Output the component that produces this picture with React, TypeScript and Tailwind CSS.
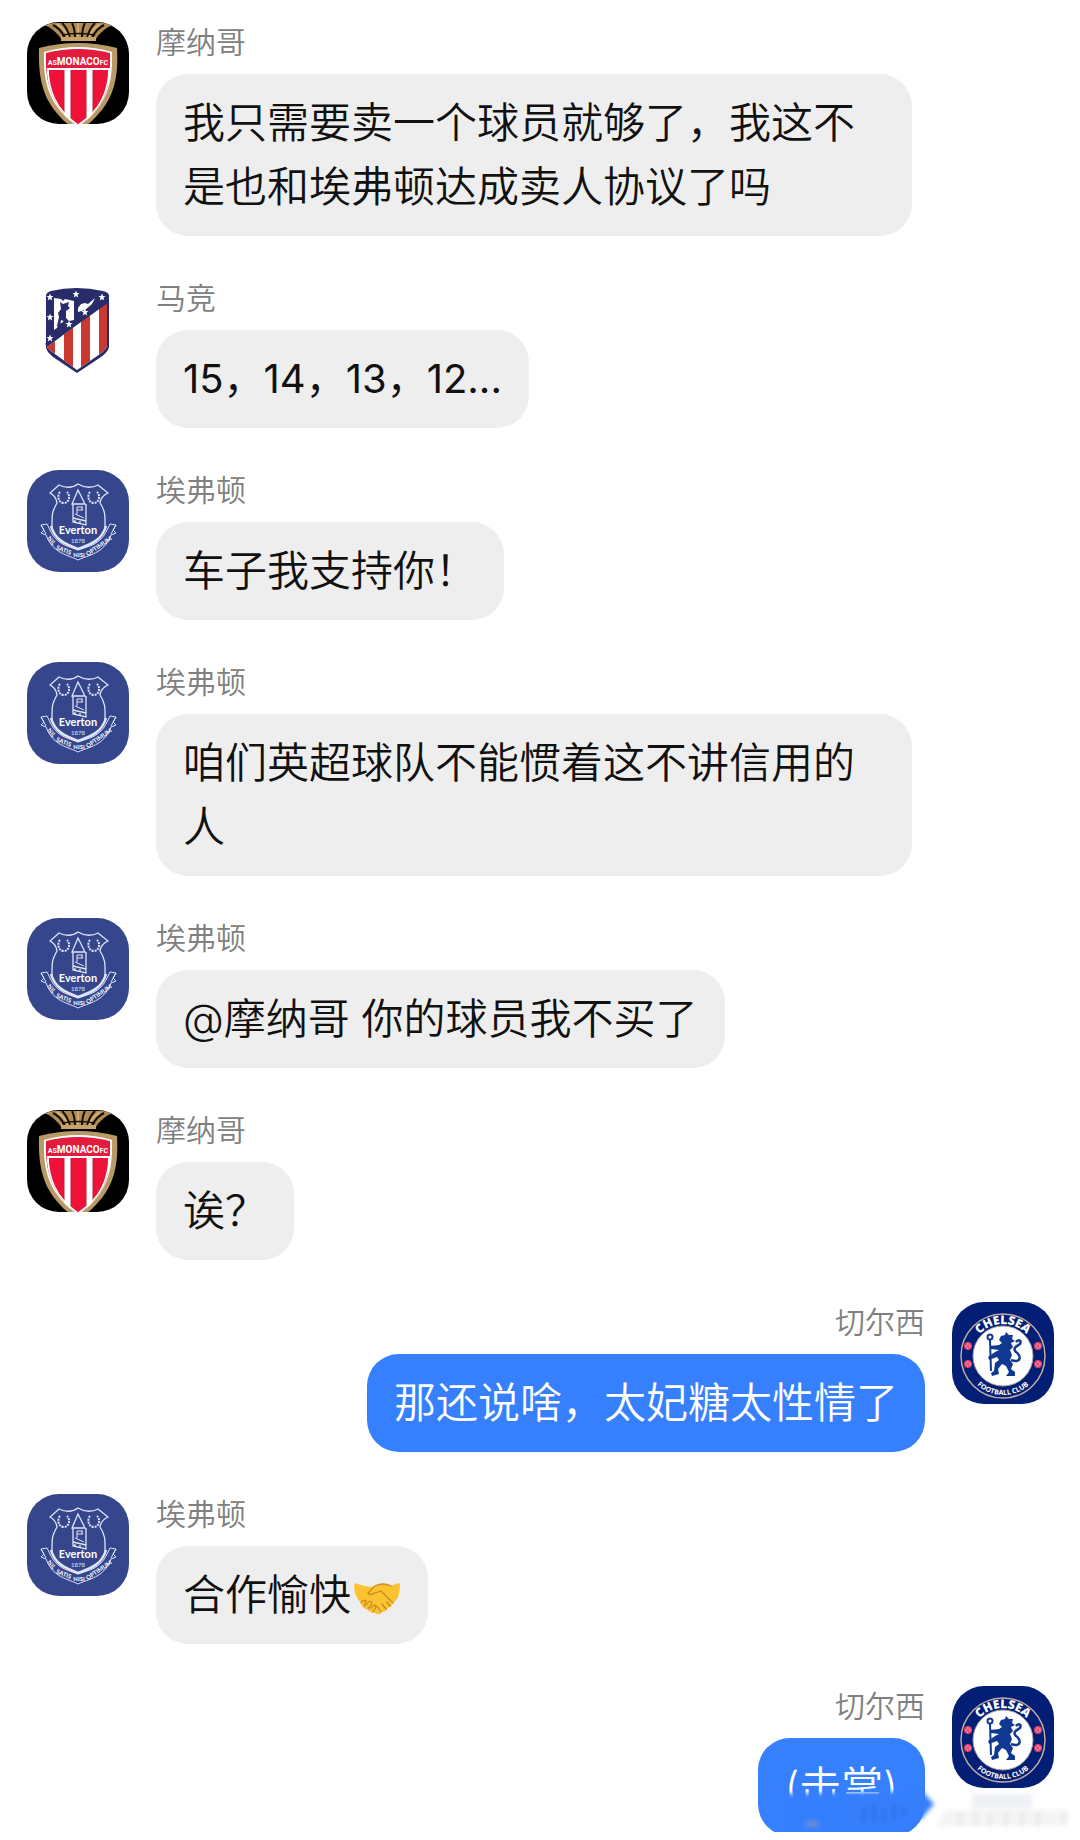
import { useId, type ReactNode } from "react";

type Club = "monaco" | "atletico" | "everton" | "chelsea";

interface Message {
  id: number;
  club: Club;
  content: ReactNode;
  mine?: boolean;
}

const NAMES: Record<Club, string> = {
  monaco: "摩纳哥",
  atletico: "马竞",
  everton: "埃弗顿",
  chelsea: "切尔西",
};

function MonacoCrest() {
  const clip = useId();
  return (
    <svg viewBox="0 0 102 102" className="size-full">
      <defs>
        <clipPath id={clip}>
          <path d="M20 46H83C82 68 76 88 51 104C27 88 21 68 20 46Z" />
        </clipPath>
      </defs>
      <rect width="102" height="102" fill="#000" />
      {/* Crown */}
      <path d="M17 3Q22 1 28 1H75Q81 1 86 3Q76 6 68 18H35Q27 6 17 3Z" fill="#b08c54" />
      <path d="M26 3Q34 7 38 16M35 1Q41 7 43 16M45 1Q48 7 48 16M58 1Q55 7 55 16M68 1Q62 7 60 16M77 3Q69 7 65 16" fill="none" stroke="#150e05" strokeWidth="2" />
      <path d="M30 2Q38 7 41 15M51 1V15M73 2Q65 7 62 15" fill="none" stroke="#d6b67b" strokeWidth="1.5" />
      <path d="M35 13Q51 10 68 13" fill="none" stroke="#150e05" strokeWidth="1.5" />
      <path d="M34 20L37 25H66L69 20Z" fill="#000" />
      <rect x="34" y="15" width="35" height="4" fill="#c5a469" />
      {/* Shield */}
      <path d="M12 26Q51 16 90 26C92 62 85 86 51 110C17 86 11 62 12 26Z" fill="#b89a64" />
      <path d="M17 30Q51 20 85 30C86 62 80 84 51 105C22 84 16 62 17 30Z" fill="#fff" />
      <path d="M19 31Q51 23 83 31C84 62 78 82 51 102C24 82 18 62 19 31Z" fill="#e31b3d" />
      <g clipPath={`url(#${clip})`}>
        <rect x="17" y="46" width="68" height="60" fill="#fff" />
        <path d="M22 48H37V106H22ZM44 48H59V106H44ZM66 48H81V106H66Z" fill="#ee1238" />
        <path d="M37 48V106M44 48V106M59 48V106M66 48V106" stroke="#a62745" />
        <path d="M20 46C21 68 27 88 51 104C76 88 82 68 83 46" fill="none" stroke="#fff" strokeWidth="3" />
      </g>
      <path d="M20 47H83" stroke="#fff" strokeWidth="2" />
      <text x="51" y="43" textAnchor="middle" fill="#fff" fontFamily="Liberation Sans Narrow, Roboto, sans-serif" fontWeight="700">
        <tspan fontSize="7">AS</tspan>
        <tspan fontSize="10">MONACO</tspan>
        <tspan fontSize="7">FC</tspan>
      </text>
    </svg>
  );
}

const STARS = [
  [23, 19],
  [49, 16],
  [75, 19],
  [23, 39],
  [58, 34],
  [42, 46],
  [23, 60],
];

function AtleticoCrest() {
  const clip = useId();
  return (
    <svg viewBox="0 0 102 102" className="size-full">
      <defs>
        <clipPath id={clip}>
          <path d="M20 69L80 24V67Q80 71 73 76L50 92L28 76Q21 71 20 69Z" />
        </clipPath>
      </defs>
      <path d="M19 17Q20 14 24 13Q49 7 76 13Q81 14 82 17V69Q81 74 74 79L50 95L26 79Q19 73 19 69Z" fill="#282d6a" />
      <g clipPath={`url(#${clip})`}>
        <rect x="18" y="20" width="64" height="76" fill="#fff" />
        <path d="M20 20H28V96H20ZM37 20H46V96H37ZM54 20H63V96H54ZM72 20H80V96H72Z" fill="#c8392f" />
      </g>
      <path d="M19 67L81 23" stroke="#282d6a" strokeWidth="3" />
      {/* Bear and strawberry tree */}
      <path d="M27 20L34 21L36 23L38 21L47 23V42L42 43L39 40L36 44L31 47L30 50L27 52Z" fill="#fff" />
      <path d="M33 24L36 26L42 24L41 28L43 30L39 33L39 44L34 42L33 48H30L32 39L31 35L34 31Z" fill="#282d6a" />
      <path d="M51 30L54 26L58 25L61 26L68 20L65 26L58 32L51 34Z" fill="#fff" />
      {STARS.map(([x, y]) => (
        <path
          key={`${x}-${y}`}
          transform={`translate(${x} ${y})`}
          d="M0-3.5L1-1L3.5-1L1.5.8L2.2 3.4L0 1.9L-2.2 3.4L-1.5.8L-3.5-1L-1-1Z"
          fill="#fff"
        />
      ))}
    </svg>
  );
}

function EvertonCrest() {
  return (
    <svg viewBox="0 0 102 102" className="size-full">
      <rect width="102" height="102" fill="#35468c" />
      <g fill="none" stroke="#dfe5f8" strokeWidth="1.3">
        <path d="M25 58C25 43 25 42 30 33Q29 26 23 23L32 15Q43 20 51 14Q61 20 71 15L81 23Q74 26 73 33C79 42 78 47 78 58" />
        <path d="M24 56C28 70 38 74 51 79C65 74 75 70 79 56" strokeWidth="2.5" />
        <path d="M33 22C30 25 31 33 37 33C42 33 44 26 40 22M63 22C60 25 61 33 67 33C72 33 74 26 70 22" strokeDasharray="2 1" strokeWidth="2" />
        <path d="M51 20L45 34H58ZM46 34V52L59 55V34M46 48L59 51M48 50V53M53 51V54" />
        <path d="M50 37H56M50 37V44M50 40H56M55 37V40M48 44L57 48" strokeWidth="1" />
        {/* Motto ribbon */}
        <path d="M19 64L14 55L20 54L23 60C30 75 41 76 51 80C62 76 73 75 80 60L83 54L89 55L84 64M14 55L17 60L14 63L19 65C26 84 42 85 51 90C61 85 77 84 84 65L89 63L86 60L89 55" strokeWidth="1" />
      </g>
      <text x="51" y="64" textAnchor="middle" fontSize="11" fontWeight="700" fontFamily="Lato, sans-serif" fill="#fff">
        Everton
      </text>
      <text x="51" y="73" textAnchor="middle" fontSize="6" fontWeight="400" fontFamily="Lato, sans-serif" fill="#dfe5f8">
        1878
      </text>
      <g fontSize="6" fontWeight="700" fontFamily="Lato, sans-serif" fill="#fff" textAnchor="middle">
        <text transform="translate(23 72) rotate(52)">NIL</text>
        <text transform="translate(36 82) rotate(22)">SATIS</text>
        <text transform="translate(52 87)">NISI</text>
        <text transform="translate(73 78) rotate(-34)">OPTIMUM</text>
      </g>
    </svg>
  );
}

function ChelseaCrest() {
  const top = useId();
  const bottom = useId();
  return (
    <svg viewBox="0 0 102 102" className="size-full">
      <defs>
        <path id={top} d="M19 54A32 32 0 0 1 83 54" />
        <path id={bottom} d="M12 54A39 39 0 0 0 90 54" />
      </defs>
      <rect width="102" height="102" fill="#031f75" />
      <circle cx="51" cy="54" r="42" fill="none" stroke="#c2aba0" strokeWidth="1.5" />
      <circle cx="51" cy="54" r="30" fill="#fff" stroke="#aaa0a5" />
      <text fontSize="12" fontWeight="800" fontFamily="Open Sans, sans-serif" fill="#fff">
        <textPath href={`#${top}`} startOffset="50%" textAnchor="middle">
          CHELSEA
        </textPath>
      </text>
      <text fontSize="7" fontWeight="700" fontFamily="Open Sans, sans-serif" fill="#fff">
        <textPath href={`#${bottom}`} startOffset="50%" textAnchor="middle">
          FOOTBALL CLUB
        </textPath>
      </text>
      {[
        [16, 44],
        [16, 62],
        [86, 44],
        [86, 62],
      ].map(([x, y]) => (
        <g key={`${x}-${y}`}>
          <circle cx={x} cy={y} r="4" fill="#e0406a" />
          <circle cx={x} cy={y} r="2" fill="none" stroke="#fff" strokeWidth=".8" strokeDasharray="1.5 1" />
        </g>
      ))}
      {/* Lion with staff */}
      <circle cx="38" cy="35" r="2.5" fill="none" stroke="#103a91" strokeWidth="2" />
      <path d="M38 38L39 69" stroke="#103a91" strokeWidth="2" />
      <path d="M49 34L53 33L54 30L57 33L61 33L60 37L63 39L59 41L61 45L58 48L60 53L58 58L61 62L59 67L63 70L63 74L54 74L57 70L54 64L50 62L46 67L47 72L40 74L39 71L42 69L43 61L47 58L45 55L37 58L36 55L43 50L47 48L39 47L38 44L47 43L50 41L47 38Z" fill="#103a91" />
      <path d="M59 58C70 62 69 53 64 50C60 46 65 44 68 42C70 37 66 38 64 40" fill="none" stroke="#103a91" strokeWidth="2.5" />
    </svg>
  );
}

function Handshake() {
  return (
    <svg viewBox="0 0 48 34" role="img" aria-label="握手" className="ml-0.5 inline-block h-[34px] w-12 align-middle">
      <path d="M1 3Q2 0 5 2Q15 6 22 4Q30 0 38 4L45 1Q47 1 47 3Q47 17 40 21Q39 25 35 26Q33 30 29 30Q26 34 22 31Q17 31 14 27Q9 27 8 21Q1 14 1 3Z" fill="#fcc331" />
      <path d="M22 4L15 11Q16 14 22 11L28 9L40 21M34 20L37 24M29 22L33 27M24 24L28 30M8 21Q10 17 13 19L11 24M13 23Q17 17 19 21L15 27M18 26Q22 21 23 25L20 30M22 4Q30 0 38 4" fill="none" stroke="#c88b20" strokeWidth="1.3" strokeLinecap="round" />
    </svg>
  );
}

// Blurred-out strip over the last line of the thread
function Smudge() {
  const soft = useId();
  return (
    <svg viewBox="0 0 320 52" aria-hidden="true" className="absolute right-0 bottom-2 h-[52px] w-80 overflow-hidden">
      <defs>
        <filter id={soft} x="-10%" y="-20%" width="120%" height="140%">
          <feGaussianBlur stdDeviation="2" />
        </filter>
      </defs>
      <g filter={`url(#${soft})`}>
        <path d="M26 14L162 11L174 24L162 38L148 46H26Z" fill="#367ffd" />
        <path d="M104 26V42M114 24V42M124 28V42M134 24V40M144 26V36" stroke="#2f72ea" strokeWidth="4" />
        <ellipse cx="52" cy="44" rx="7" ry="3" fill="#6f8fc9" />
        <rect x="212" y="14" width="60" height="14" fill="#eef0f6" />
        <path d="M186 30H308V46H176Z" fill="#f4f4f5" />
        <path d="M200 32V46M216 32V46M230 34V46M246 32V46M262 32V46M278 32V46M304 34V42" stroke="#e8e8ea" strokeWidth="4" />
      </g>
    </svg>
  );
}

const CRESTS: Record<Club, () => ReactNode> = {
  monaco: MonacoCrest,
  atletico: AtleticoCrest,
  everton: EvertonCrest,
  chelsea: ChelseaCrest,
};

const MESSAGES: Message[] = [
  { id: 1, club: "monaco", content: "我只需要卖一个球员就够了，我这不是也和埃弗顿达成卖人协议了吗" },
  { id: 2, club: "atletico", content: <span className="block text-[40px] font-normal">15，14，13，12...</span> },
  { id: 3, club: "everton", content: "车子我支持你！" },
  { id: 4, club: "everton", content: "咱们英超球队不能惯着这不讲信用的人" },
  { id: 5, club: "everton", content: "@摩纳哥 你的球员我不买了" },
  { id: 6, club: "monaco", content: "诶？" },
  { id: 7, club: "chelsea", content: "那还说啥，太妃糖太性情了", mine: true },
  {
    id: 8,
    club: "everton",
    content: (
      <>
        合作愉快
        <Handshake />
      </>
    ),
  },
  { id: 9, club: "chelsea", content: "(击掌)", mine: true },
];

function MessageRow({ club, content, mine }: Message) {
  const Crest = CRESTS[club];
  return (
    <li className={`flex items-start gap-[27px] ${mine ? "flex-row-reverse" : ""}`}>
      <div className="size-[102px] shrink-0 overflow-hidden rounded-[32px]">
        <Crest />
      </div>
      <div className={`flex max-w-[756px] flex-col gap-3 ${mine ? "items-end" : "items-start"}`}>
        <span className="text-[30px] leading-10 text-[#808080]">{NAMES[club]}</span>
        <p
          className={`rounded-[32px] px-[27px] py-[17px] text-[42px] leading-16 ${
            mine ? "bg-[#367ffd] text-white" : "bg-[#eeeeee] text-[#111111]"
          }`}
        >
          {content}
        </p>
      </div>
    </li>
  );
}

export default function App() {
  return (
    <main className="relative overflow-hidden bg-white pt-[22px] pr-[26px] pb-2 pl-[27px] font-['Inter','Noto_Sans_CJK_SC',sans-serif] font-[350]">
      <ul className="-mb-1 flex flex-col gap-[42px]">
        {MESSAGES.map((m) => (
          <MessageRow key={m.id} {...m} />
        ))}
      </ul>
      <div className="absolute bottom-0 left-0 h-2 w-full bg-white" />
      <Smudge />
    </main>
  );
}
